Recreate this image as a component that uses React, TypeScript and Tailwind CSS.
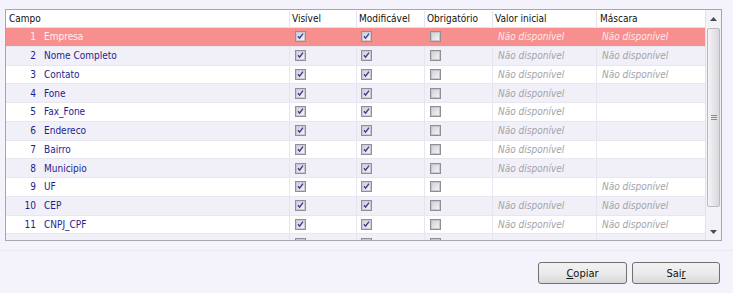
import React from "react";

type Row = { n: number; name: string; valor: boolean; mascara: boolean };

const rows: Row[] = [
  { n: 1, name: "Empresa", valor: true, mascara: true },
  { n: 2, name: "Nome Completo", valor: true, mascara: true },
  { n: 3, name: "Contato", valor: true, mascara: true },
  { n: 4, name: "Fone", valor: true, mascara: false },
  { n: 5, name: "Fax_Fone", valor: true, mascara: false },
  { n: 6, name: "Endereco", valor: true, mascara: false },
  { n: 7, name: "Bairro", valor: true, mascara: false },
  { n: 8, name: "Municipio", valor: true, mascara: false },
  { n: 9, name: "UF", valor: false, mascara: true },
  { n: 10, name: "CEP", valor: true, mascara: true },
  { n: 11, name: "CNPJ_CPF", valor: true, mascara: true },
];

function Check({ checked }: { checked: boolean }) {
  return (
    <svg width="11" height="11" viewBox="0 0 11 11" className="block">
      <defs>
        <linearGradient id="cbg" x1="0" y1="0" x2="1" y2="1">
          <stop offset="0" stopColor="#cfcfd6" />
          <stop offset="1" stopColor="#f6f6f6" />
        </linearGradient>
      </defs>
      <rect x="0.5" y="0.5" width="10" height="10" fill="#f4f4f4" stroke={checked ? "#8f909c" : "#8f8f94"} />
      <rect x="1.5" y="1.5" width="8" height="8" fill="url(#cbg)" stroke={checked ? "#c9c9d2" : "#c6c6cc"} />
      {checked && (
        <path d="M3 5.2 L4.6 7.2 L8 2.6" fill="none" stroke="#3b3b96" strokeWidth="1.4" />
      )}
    </svg>
  );
}

function NA({ white }: { white?: boolean }) {
  return (
    <span className={`italic ${white ? "text-[#fde8e8]" : "text-[#a3a3a8]"}`}>Não disponível</span>
  );
}

export default function App() {
  const font = { fontFamily: '"DejaVu Sans Condensed", "Liberation Sans", sans-serif' };
  return (
    <div className="w-[733px] h-[293px] bg-[#f4f3fb] overflow-hidden flex flex-col text-[10px] leading-none" style={font}>
      <div className="ml-[5px] mt-[9px] w-[717px] h-[232px] border border-[#a6a6ae] bg-white flex">
        <div className="w-[699px] h-full overflow-hidden flex flex-col">
          {/* header */}
          <div className="h-[18px] flex items-center border-b border-[#e2e1ec] text-[#111] bg-white shrink-0 pt-[1px]">
            <div className="w-[284px] pl-[3px] border-r border-[#e4e3ee] h-full flex items-center">Campo</div>
            <div className="w-[67px] pl-[2px] border-r border-[#e4e3ee] h-full flex items-center">Visível</div>
            <div className="w-[68px] pl-[2px] border-r border-[#e4e3ee] h-full flex items-center">Modificável</div>
            <div className="w-[68px] pl-[2px] border-r border-[#e4e3ee] h-full flex items-center">Obrigatório</div>
            <div className="w-[104px] pl-[2px] border-r border-[#e4e3ee] h-full flex items-center">Valor inicial</div>
            <div className="w-[108px] pl-[3px] h-full flex items-center">Máscara</div>
          </div>
          {rows.map((r) => {
            const sel = r.n === 1;
            const bg = sel ? "bg-[#f88f8f]" : r.n % 2 === 0 ? "bg-[#f1f0f9]" : "bg-white";
            const txt = sel ? "text-[#fdf0f0]" : "text-[#1e1e8e]";
            const line = sel ? "border-[#f88f8f]" : "border-[#e6e5ef]";
            return (
              <div key={r.n} className={`h-[18.75px] shrink-0 flex items-stretch border-b border-[#e8e7f0] ${bg} ${txt}`}>
                <div className={`w-[284px] flex items-center pt-[1px] border-r ${line}`}>
                  <span className="w-[30px] text-right">{r.n}</span>
                  <span className="ml-[8px]">{r.name}</span>
                </div>
                <div className={`w-[67px] flex items-center pl-[5px] border-r ${line}`}>
                  <Check checked />
                </div>
                <div className={`w-[68px] flex items-center pl-[4px] border-r ${line}`}>
                  <Check checked />
                </div>
                <div className={`w-[68px] flex items-center pl-[5px] border-r ${line}`}>
                  <Check checked={false} />
                </div>
                <div className={`w-[104px] flex items-center pt-[1px] pl-[5px] border-r ${line}`}>
                  {r.valor && <NA white={sel} />}
                </div>
                <div className="w-[108px] flex items-center pt-[1px] pl-[5px]">
                  {r.mascara && <NA white={sel} />}
                </div>
              </div>
            );
          })}
          <div className="h-[18.75px] shrink-0 flex items-stretch bg-[#f1f0f9]">
            <div className="w-[284px] border-r border-[#e6e5ef]" />
            <div className="w-[67px] flex items-center pl-[5px] border-r border-[#e6e5ef]"><Check checked /></div>
            <div className="w-[68px] flex items-center pl-[4px] border-r border-[#e6e5ef]"><Check checked /></div>
            <div className="w-[68px] flex items-center pl-[5px] border-r border-[#e6e5ef]"><Check checked={false} /></div>
            <div className="w-[104px] border-r border-[#e6e5ef]" />
            <div className="w-[108px]" />
          </div>
        </div>
        {/* scrollbar */}
        <div className="w-[16px] h-full bg-[#f3f3f7] border-l border-[#e2e2ea] flex flex-col">
          <div className="h-[18px] flex items-center justify-center">
            <svg width="7" height="4" viewBox="0 0 7 4"><path d="M0 4 L3.5 0 L7 4 Z" fill="#4a4a55" /></svg>
          </div>
          <div className="flex-1 flex flex-col px-[1px]">
            <div className="h-[179px] rounded-[2px] border border-[#b9b9c2] bg-gradient-to-r from-[#f4f4f6] via-[#e6e6ea] to-[#d8d8de] flex items-center justify-center">
              <div className="flex flex-col gap-[1px]">
                <div className="w-[6px] h-[1px] bg-[#8a8a94]" />
                <div className="w-[6px] h-[1px] bg-[#8a8a94]" />
                <div className="w-[6px] h-[1px] bg-[#8a8a94]" />
              </div>
            </div>
          </div>
          <div className="h-[17px] flex items-center justify-center">
            <svg width="7" height="4" viewBox="0 0 7 4"><path d="M0 0 L7 0 L3.5 4 Z" fill="#4a4a55" /></svg>
          </div>
        </div>
      </div>
      <div className="mt-[9px] border-t border-[#e9e8f3] flex-1 flex justify-end items-start pt-[11px] pr-[13px] gap-[5px]">
        <button className="w-[89px] h-[22px] rounded-[3px] border border-[#707070] bg-gradient-to-b from-[#f2f2f2] via-[#ebebeb] to-[#d9d9d9] text-[#111] text-[11px] flex items-center justify-center" style={font}>
          <span><span className="underline">C</span>opiar</span>
        </button>
        <button className="w-[88px] h-[22px] rounded-[3px] border border-[#707070] bg-gradient-to-b from-[#f2f2f2] via-[#ebebeb] to-[#d9d9d9] text-[#111] text-[11px] flex items-center justify-center" style={font}>
          <span>Sai<span className="underline">r</span></span>
        </button>
      </div>
    </div>
  );
}
